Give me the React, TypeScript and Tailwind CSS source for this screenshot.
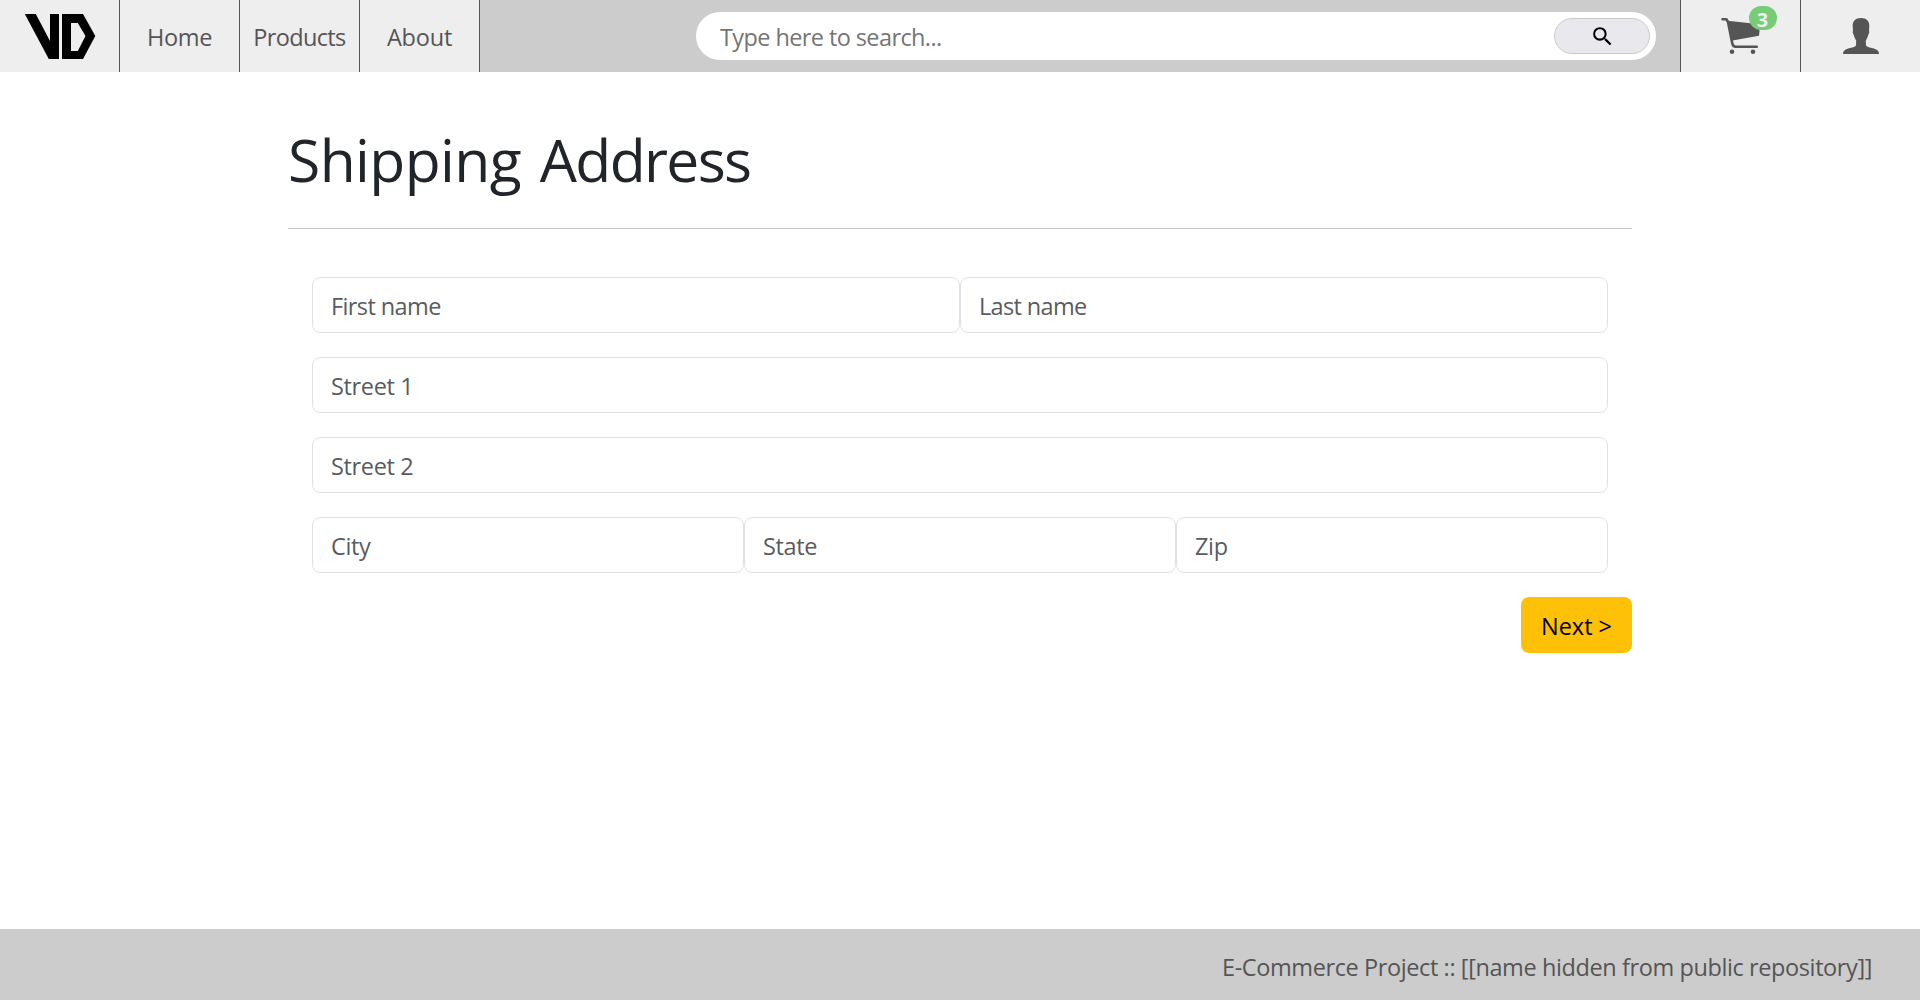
import type { ReactNode } from 'react';

function NavItem({ label, spacing }: { label: string; spacing: string }) {
  return (
    <a className="flex h-full w-[120px] items-center justify-center border-r border-[#555] bg-[#eee]">
      <span className={`pt-px whitespace-nowrap ${spacing}`}>{label}</span>
    </a>
  );
}

function Field({ label, spacing = 'tracking-[-0.35px]' }: { label: string; spacing?: string }) {
  return (
    <label className="flex h-14 flex-1 items-center rounded-[8px] border border-[#dee2e6] bg-white px-[18px] pt-0.5 text-[#595c5f]">
      <span className={spacing}>{label}</span>
    </label>
  );
}

function Row({ children }: { children: ReactNode }) {
  return <div className="flex px-6">{children}</div>;
}

function Logo() {
  return (
    <svg width="119" height="72" viewBox="0 0 119 72" fill="#000">
      <path d="M24.800 14H35.800L50 41V14H59V59H48.800Z" />
      <path fillRule="evenodd" d="M62 14H83L95.300 36L83 59H62ZM71 23V51H77.800L85.500 36L77.800 23Z" />
    </svg>
  );
}

function CartIcon() {
  return (
    <svg width="40" height="40" viewBox="0 0 40 40" fill="#555">
      <path d="M2.500 3.300H6.500L8 6L12.300 27.500Q13 30.700 15.600 30.700H36.800" fill="none" stroke="#555" strokeWidth="2.600" strokeLinecap="round" strokeLinejoin="round" />
      <path d="M7.500 4.800L39.500 8.200V15.500L39 19.800L12.500 24.600Z" />
      <circle cx="12" cy="35.800" r="2.300" />
      <circle cx="33" cy="35.800" r="2.300" />
    </svg>
  );
}

function UserIcon() {
  return (
    <svg width="36" height="36" viewBox="0 0 36 36" fill="#555">
      <path d="M18 0C23.500 0 26.500 3 26.300 8L26 13C26.600 13.200 26.300 15.500 25.400 16.500C24.800 19 23.900 20.800 22.800 22.500L23 27.500C24 29.300 27 29.300 30 30.200C34 31.400 36 32.800 36 36H0C0 32.800 2 31.400 6 30.200C9 29.300 12 29.300 13 27.500L13.200 22.500C12.100 20.800 11.200 19 10.600 16.500C9.700 15.500 9.400 13.200 10 13L9.700 8C9.500 3 12.500 0 18 0Z" />
    </svg>
  );
}

export default function App() {
  return (
    <div className="flex h-[1000px] flex-col bg-white font-['Open_Sans',sans-serif] text-[23.5px] leading-9 text-[#555]">
      <header className="flex h-[72px] shrink-0 bg-[#ccc]">
        <a className="h-full w-[120px] border-r border-[#555] bg-[#eee]">
          <Logo />
        </a>
        <NavItem label="Home" spacing="tracking-[-0.3px]" />
        <NavItem label="Products" spacing="tracking-[-0.65px]" />
        <NavItem label="About" spacing="tracking-[-0.2px]" />
        <div className="flex flex-1 justify-end py-3 pr-6">
          <div className="flex h-12 w-[960px] items-center justify-between rounded-full bg-white pr-1.5 pl-6">
            <span className="pt-px tracking-[-0.6px] text-[#757575]">Type here to search...</span>
            <button className="flex h-9 w-24 items-center justify-center rounded-full border border-[#ccc] bg-[#e9e9ed]">
              <svg width="25" height="25" viewBox="0 0 24 24" fill="#000">
                <path d="M15.500 14h-.79l-.28-.27A6.471 6.471 0 0 0 16 9.500 6.500 6.500 0 1 0 9.500 16c1.610 0 3.090-.59 4.230-1.570l.27.28v.79l5 4.990L20.490 19l-4.990-5zm-6 0C7.010 14 5 11.990 5 9.500S7.010 5 9.500 5 14 7.010 14 9.500 11.990 14 9.500 14z" />
              </svg>
            </button>
          </div>
        </div>
        <a className="relative h-full w-[120px] border-l border-[#555] bg-[#eee] pt-4 pl-[39px]">
          <CartIcon />
          <span className="absolute top-1.5 left-[68px] flex h-6 w-7 items-center justify-center rounded-[12px] bg-[#77cc77] pt-1 pr-px font-['Noto_Sans'] text-[20px] leading-5 font-bold text-[#eee]">3</span>
        </a>
        <a className="h-full w-[120px] border-l border-[#555] bg-[#eee] pt-[18px] pl-[42px]">
          <UserIcon />
        </a>
      </header>

      <main className="mx-auto flex w-[1344px] flex-1 flex-col gap-6">
        <h1 className="mb-6 h-[157px] border-b border-[#c8c9ca] pt-[51px] text-[58.8px] leading-[72px] tracking-[-0.6px] text-[#212529] [word-spacing:4px]">
          Shipping <span className="tracking-[-1.65px]">Address</span>
        </h1>
        <Row>
          <Field label="First name" spacing="tracking-[-0.6px]" />
          <Field label="Last name" spacing="tracking-[-0.65px]" />
        </Row>
        <Row>
          <Field label="Street 1" />
        </Row>
        <Row>
          <Field label="Street 2" />
        </Row>
        <Row>
          <Field label="City" />
          <Field label="State" />
          <Field label="Zip" />
        </Row>
        <button className="flex h-14 w-[111px] items-center justify-center self-end rounded-[8px] bg-[#ffc107] pt-0.5 whitespace-nowrap text-black">
          Next &gt;
        </button>
      </main>

      <footer className="flex h-[71px] shrink-0 items-center justify-end bg-[#ccc] pt-1 pr-12 tracking-[-0.4px]">
        E-Commerce Project :: [[name hidden from public repository]]
      </footer>
    </div>
  );
}
